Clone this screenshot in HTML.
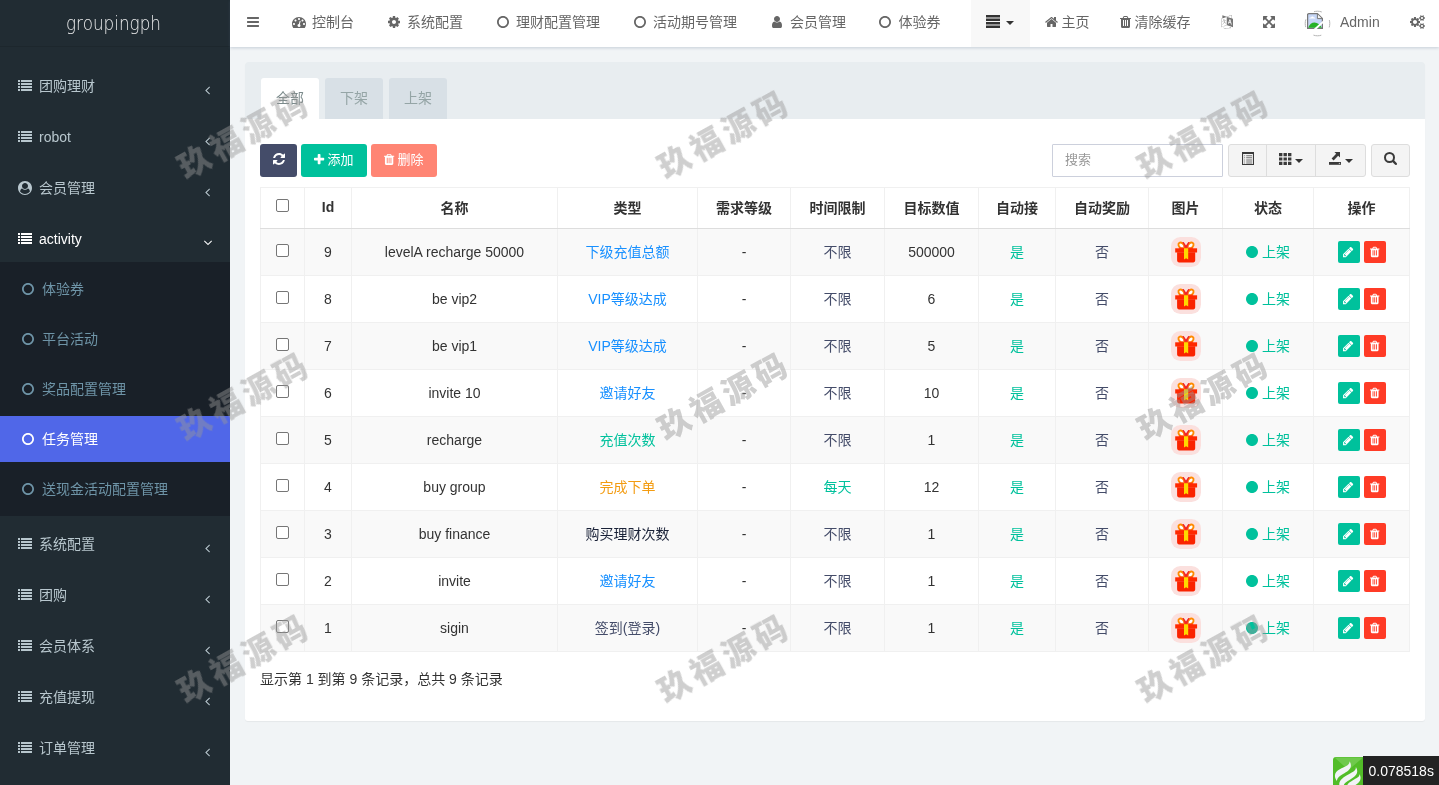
<!DOCTYPE html>
<html lang="zh-CN"><head><meta charset="utf-8"><title>groupingph</title>
<style>
*{box-sizing:border-box;margin:0;padding:0}
html,body{width:1439px;height:785px;overflow:hidden}
body{background:#f1f4f6;font-family:"Liberation Sans","Noto Sans CJK SC",sans-serif;font-size:14px;color:#333;position:relative}
#app{position:absolute;left:0;top:0;width:1439px;height:785px;overflow:hidden;will-change:transform}
svg.i{display:inline-block;vertical-align:-0.143em;overflow:visible}
#sidebar{position:absolute;left:0;top:0;width:230px;height:785px;background:#212c33;color:#b8c7ce}
.logo{height:47px;line-height:46px;text-align:center;color:#fff;font-size:20px;font-family:"DejaVu Sans","Liberation Sans",sans-serif;font-weight:200;opacity:.9;border-bottom:1px solid rgba(0,0,0,.12)}
.logo span{display:inline-block;transform:scaleX(.84);position:relative;left:-1.5px;transform-origin:50% 50%}
.smenu{position:absolute;top:64px;left:0;width:230px}
.sitem{height:45px;margin-bottom:6px;position:relative;color:#b8c7ce;font-size:14px}
.sitem.open{color:#fff}
.sico{position:absolute;left:18px;top:14px;line-height:16px}
.slabel{position:absolute;left:39px;top:12px;line-height:20px}
.sarrow{position:absolute;left:205px;top:18px;line-height:16px}
.submenu{background:#192028;padding-top:2px;height:254px;margin-top:-6px;margin-bottom:6px}
.subitem{height:50px;line-height:50px;padding-left:22px;color:#6e94a7;font-size:14px;position:relative}
.subitem .subico{display:inline-block;width:20px}
.subitem.active{background:#5067e8;color:#fff;height:46px;line-height:46px;margin:2px 0}
#navbar{position:absolute;left:230px;top:0;width:1209px;height:47px;background:#fff;box-shadow:0 1px 3px rgba(90,110,140,.28)}
.nav{position:absolute;top:0;height:44px;line-height:44px;color:#666;font-size:14px;white-space:nowrap;margin-left:-230px}
.navdd{position:absolute;left:741px;top:0;width:59px;height:47px;background:#f8f8f8;line-height:45px;padding-left:15px;color:#333}
.caret{display:inline-block;width:0;height:0;border-top:4px solid;border-left:4px solid transparent;border-right:4px solid transparent;vertical-align:middle;margin-left:5px}
.gb .caret{position:relative;top:2px}
.avatar{position:absolute;left:1074px;top:10px;width:27px;height:27px}
#panel{position:absolute;left:245px;top:62px;width:1180px;height:659px;background:#fff;border-radius:3px;box-shadow:0 1px 1px rgba(0,0,0,.05)}
.phead{height:57px;background:#e8edf0;border-radius:3px 3px 0 0;position:relative}
.tab{position:absolute;top:16px;width:58px;height:41px;line-height:40px;text-align:center;background:#d8e0e6;color:#95a5a6;border-radius:3px 3px 0 0;font-size:14px}
.tab.active{background:#fff;color:#7b8a8b}
.toolbar{position:absolute;left:0;top:82px;width:1180px;height:33px}
.btn{position:absolute;top:0;height:33px;line-height:32px;border-radius:3px;color:#fff;text-align:center;font-size:13px}
.b-ref{background:#444c69}.b-add{background:#00c19c}.b-del{background:#ff8574}
.search{position:absolute;left:807px;top:0;width:171px;height:33px;border:1px solid #ccd0dc;border-radius:1px;line-height:29px;padding-left:12px;color:#999;font-size:13px;background:#fff}
.bgroup{position:absolute;left:983px;top:0;width:138px;height:33px;border:1px solid #ddd;border-radius:3px;background:#f4f4f4;display:flex}
.gb{display:block;height:31px;line-height:27px;text-align:center;border-right:1px solid #ddd;color:#333}
.gsearch{position:absolute;left:1126px;top:0;width:39px;height:33px;border:1px solid #ddd;border-radius:3px;background:#f4f4f4;text-align:center;line-height:27px;color:#333}
.tbl{position:absolute;left:15px;top:125px;width:1149px;border-collapse:collapse;table-layout:fixed;font-size:14px}
.tbl th,.tbl td{border:1px solid #f0f0f0;text-align:center;vertical-align:middle;padding:0}
.tbl th{height:41px;padding-bottom:2px;font-weight:bold;color:#333;border-bottom:1px solid #ddd}
.tbl td{height:47px}
.tbl tr.odd td{background:#f9f9f9}
.tbl td.cj{padding-bottom:3px}
.cb{display:inline-block;width:13px;height:13px;border:1px solid #767676;border-radius:2px;background:#fff;position:relative;top:0}
.c-info{color:#1890ff}.c-succ{color:#00c19c}.c-warn{color:#f39c12}.c-p{color:#444c69}.c-dark{color:#1a2238}
.gift{vertical-align:middle}
.xbtn{display:inline-block;width:22px;height:22px;line-height:21px;border-radius:2px;text-align:center;margin:0 2px;vertical-align:middle}
.xbtn.g{background:#00c19c}.xbtn.r{background:#ff3b26;margin-left:2px}
.pinfo{position:absolute;left:15px;top:607px;line-height:20px;font-size:14px;color:#333}
.wm{position:absolute;width:300px;height:60px;line-height:60px;text-align:center;font-size:32px;font-weight:900;color:rgba(150,150,150,.46);transform:rotate(-29deg);letter-spacing:4.5px;text-indent:4.5px;pointer-events:none;font-family:"Noto Sans CJK SC",sans-serif;z-index:50}
#trace{position:absolute;right:0;bottom:0;height:29px;display:flex;align-items:flex-end;z-index:60}
.tlogo{width:30px;height:28px}
.ttime{background:#232323;color:#fff;height:29px;line-height:30px;font-size:14px;padding:0 0 0 5.5px;width:76px}

</style></head><body><div id="app">
<div id="sidebar"><div class="logo"><span>groupingph</span></div><div class="smenu"><div class="sitem"><span class="sico"><svg class="i " width="14.00" height="14" viewBox="0 0 1792 1792" style=""><path fill="currentColor" d="M256 1312C256 1295 241 1280 224 1280H32C15 1280 0 1295 0 1312V1504C0 1521 15 1536 32 1536H224C241 1536 256 1521 256 1504ZM256 928C256 911 241 896 224 896H32C15 896 0 911 0 928V1120C0 1137 15 1152 32 1152H224C241 1152 256 1137 256 1120ZM256 544C256 527 241 512 224 512H32C15 512 0 527 0 544V736C0 753 15 768 32 768H224C241 768 256 753 256 736ZM1792 1312C1792 1295 1777 1280 1760 1280H416C399 1280 384 1295 384 1312V1504C384 1521 399 1536 416 1536H1760C1777 1536 1792 1521 1792 1504ZM256 160C256 143 241 128 224 128H32C15 128 0 143 0 160V352C0 369 15 384 32 384H224C241 384 256 369 256 352ZM1792 928C1792 911 1777 896 1760 896H416C399 896 384 911 384 928V1120C384 1137 399 1152 416 1152H1760C1777 1152 1792 1137 1792 1120ZM1792 544C1792 527 1777 512 1760 512H416C399 512 384 527 384 544V736C384 753 399 768 416 768H1760C1777 768 1792 753 1792 736ZM1792 160C1792 143 1777 128 1760 128H416C399 128 384 143 384 160V352C384 369 399 384 416 384H1760C1777 384 1792 369 1792 352Z"/></svg></span><span class="slabel">团购理财</span><span class="sarrow"><svg class="i " width="5.00" height="14" viewBox="0 0 640 1792" style=""><path fill="currentColor" d="M627 544C627 535 623 527 617 521L567 471C561 465 552 461 544 461C536 461 527 465 521 471L55 937C49 943 45 952 45 960C45 968 49 977 55 983L521 1449C527 1455 536 1459 544 1459C552 1459 561 1455 567 1449L617 1399C623 1393 627 1384 627 1376C627 1368 623 1359 617 1353L224 960L617 567C623 561 627 552 627 544Z"/></svg></span></div><div class="sitem"><span class="sico"><svg class="i " width="14.00" height="14" viewBox="0 0 1792 1792" style=""><path fill="currentColor" d="M256 1312C256 1295 241 1280 224 1280H32C15 1280 0 1295 0 1312V1504C0 1521 15 1536 32 1536H224C241 1536 256 1521 256 1504ZM256 928C256 911 241 896 224 896H32C15 896 0 911 0 928V1120C0 1137 15 1152 32 1152H224C241 1152 256 1137 256 1120ZM256 544C256 527 241 512 224 512H32C15 512 0 527 0 544V736C0 753 15 768 32 768H224C241 768 256 753 256 736ZM1792 1312C1792 1295 1777 1280 1760 1280H416C399 1280 384 1295 384 1312V1504C384 1521 399 1536 416 1536H1760C1777 1536 1792 1521 1792 1504ZM256 160C256 143 241 128 224 128H32C15 128 0 143 0 160V352C0 369 15 384 32 384H224C241 384 256 369 256 352ZM1792 928C1792 911 1777 896 1760 896H416C399 896 384 911 384 928V1120C384 1137 399 1152 416 1152H1760C1777 1152 1792 1137 1792 1120ZM1792 544C1792 527 1777 512 1760 512H416C399 512 384 527 384 544V736C384 753 399 768 416 768H1760C1777 768 1792 753 1792 736ZM1792 160C1792 143 1777 128 1760 128H416C399 128 384 143 384 160V352C384 369 399 384 416 384H1760C1777 384 1792 369 1792 352Z"/></svg></span><span class="slabel">robot</span><span class="sarrow"><svg class="i " width="5.00" height="14" viewBox="0 0 640 1792" style=""><path fill="currentColor" d="M627 544C627 535 623 527 617 521L567 471C561 465 552 461 544 461C536 461 527 465 521 471L55 937C49 943 45 952 45 960C45 968 49 977 55 983L521 1449C527 1455 536 1459 544 1459C552 1459 561 1455 567 1449L617 1399C623 1393 627 1384 627 1376C627 1368 623 1359 617 1353L224 960L617 567C623 561 627 552 627 544Z"/></svg></span></div><div class="sitem"><span class="sico"><svg class="i " width="14.00" height="14" viewBox="0 0 1792 1792" style=""><path fill="currentColor" d="M1523 1339C1384 1535 1155 1664 896 1664C637 1664 408 1535 269 1339C295 1152 371 986 541 963C629 1059 756 1120 896 1120C1036 1120 1163 1059 1251 963C1421 986 1497 1152 1523 1339ZM1280 640C1280 852 1108 1024 896 1024C684 1024 512 852 512 640C512 428 684 256 896 256C1108 256 1280 428 1280 640ZM1792 896C1792 401 1391 0 896 0C401 0 0 401 0 896C0 1390 401 1792 896 1792C1392 1792 1792 1389 1792 896Z"/></svg></span><span class="slabel">会员管理</span><span class="sarrow"><svg class="i " width="5.00" height="14" viewBox="0 0 640 1792" style=""><path fill="currentColor" d="M627 544C627 535 623 527 617 521L567 471C561 465 552 461 544 461C536 461 527 465 521 471L55 937C49 943 45 952 45 960C45 968 49 977 55 983L521 1449C527 1455 536 1459 544 1459C552 1459 561 1455 567 1449L617 1399C623 1393 627 1384 627 1376C627 1368 623 1359 617 1353L224 960L617 567C623 561 627 552 627 544Z"/></svg></span></div><div class="sitem open"><span class="sico"><svg class="i " width="14.00" height="14" viewBox="0 0 1792 1792" style=""><path fill="currentColor" d="M256 1312C256 1295 241 1280 224 1280H32C15 1280 0 1295 0 1312V1504C0 1521 15 1536 32 1536H224C241 1536 256 1521 256 1504ZM256 928C256 911 241 896 224 896H32C15 896 0 911 0 928V1120C0 1137 15 1152 32 1152H224C241 1152 256 1137 256 1120ZM256 544C256 527 241 512 224 512H32C15 512 0 527 0 544V736C0 753 15 768 32 768H224C241 768 256 753 256 736ZM1792 1312C1792 1295 1777 1280 1760 1280H416C399 1280 384 1295 384 1312V1504C384 1521 399 1536 416 1536H1760C1777 1536 1792 1521 1792 1504ZM256 160C256 143 241 128 224 128H32C15 128 0 143 0 160V352C0 369 15 384 32 384H224C241 384 256 369 256 352ZM1792 928C1792 911 1777 896 1760 896H416C399 896 384 911 384 928V1120C384 1137 399 1152 416 1152H1760C1777 1152 1792 1137 1792 1120ZM1792 544C1792 527 1777 512 1760 512H416C399 512 384 527 384 544V736C384 753 399 768 416 768H1760C1777 768 1792 753 1792 736ZM1792 160C1792 143 1777 128 1760 128H416C399 128 384 143 384 160V352C384 369 399 384 416 384H1760C1777 384 1792 369 1792 352Z"/></svg></span><span class="slabel">activity</span><span class="sarrow"><svg class="i " width="5.00" height="14" viewBox="0 0 640 1792" style="transform:rotate(-90deg);"><path fill="currentColor" d="M627 544C627 535 623 527 617 521L567 471C561 465 552 461 544 461C536 461 527 465 521 471L55 937C49 943 45 952 45 960C45 968 49 977 55 983L521 1449C527 1455 536 1459 544 1459C552 1459 561 1455 567 1449L617 1399C623 1393 627 1384 627 1376C627 1368 623 1359 617 1353L224 960L617 567C623 561 627 552 627 544Z"/></svg></span></div><div class="submenu"><div class="subitem"><span class="subico"><svg class="i " width="12.00" height="14" viewBox="0 0 1536 1792" style=""><path fill="currentColor" d="M768 352C1068 352 1312 596 1312 896C1312 1196 1068 1440 768 1440C468 1440 224 1196 224 896C224 596 468 352 768 352ZM1536 896C1536 472 1192 128 768 128C344 128 0 472 0 896C0 1320 344 1664 768 1664C1192 1664 1536 1320 1536 896Z"/></svg></span><span>体验券</span></div><div class="subitem"><span class="subico"><svg class="i " width="12.00" height="14" viewBox="0 0 1536 1792" style=""><path fill="currentColor" d="M768 352C1068 352 1312 596 1312 896C1312 1196 1068 1440 768 1440C468 1440 224 1196 224 896C224 596 468 352 768 352ZM1536 896C1536 472 1192 128 768 128C344 128 0 472 0 896C0 1320 344 1664 768 1664C1192 1664 1536 1320 1536 896Z"/></svg></span><span>平台活动</span></div><div class="subitem"><span class="subico"><svg class="i " width="12.00" height="14" viewBox="0 0 1536 1792" style=""><path fill="currentColor" d="M768 352C1068 352 1312 596 1312 896C1312 1196 1068 1440 768 1440C468 1440 224 1196 224 896C224 596 468 352 768 352ZM1536 896C1536 472 1192 128 768 128C344 128 0 472 0 896C0 1320 344 1664 768 1664C1192 1664 1536 1320 1536 896Z"/></svg></span><span>奖品配置管理</span></div><div class="subitem active"><span class="subico"><svg class="i " width="12.00" height="14" viewBox="0 0 1536 1792" style=""><path fill="currentColor" d="M768 352C1068 352 1312 596 1312 896C1312 1196 1068 1440 768 1440C468 1440 224 1196 224 896C224 596 468 352 768 352ZM1536 896C1536 472 1192 128 768 128C344 128 0 472 0 896C0 1320 344 1664 768 1664C1192 1664 1536 1320 1536 896Z"/></svg></span><span>任务管理</span></div><div class="subitem"><span class="subico"><svg class="i " width="12.00" height="14" viewBox="0 0 1536 1792" style=""><path fill="currentColor" d="M768 352C1068 352 1312 596 1312 896C1312 1196 1068 1440 768 1440C468 1440 224 1196 224 896C224 596 468 352 768 352ZM1536 896C1536 472 1192 128 768 128C344 128 0 472 0 896C0 1320 344 1664 768 1664C1192 1664 1536 1320 1536 896Z"/></svg></span><span>送现金活动配置管理</span></div></div><div class="sitem"><span class="sico"><svg class="i " width="14.00" height="14" viewBox="0 0 1792 1792" style=""><path fill="currentColor" d="M256 1312C256 1295 241 1280 224 1280H32C15 1280 0 1295 0 1312V1504C0 1521 15 1536 32 1536H224C241 1536 256 1521 256 1504ZM256 928C256 911 241 896 224 896H32C15 896 0 911 0 928V1120C0 1137 15 1152 32 1152H224C241 1152 256 1137 256 1120ZM256 544C256 527 241 512 224 512H32C15 512 0 527 0 544V736C0 753 15 768 32 768H224C241 768 256 753 256 736ZM1792 1312C1792 1295 1777 1280 1760 1280H416C399 1280 384 1295 384 1312V1504C384 1521 399 1536 416 1536H1760C1777 1536 1792 1521 1792 1504ZM256 160C256 143 241 128 224 128H32C15 128 0 143 0 160V352C0 369 15 384 32 384H224C241 384 256 369 256 352ZM1792 928C1792 911 1777 896 1760 896H416C399 896 384 911 384 928V1120C384 1137 399 1152 416 1152H1760C1777 1152 1792 1137 1792 1120ZM1792 544C1792 527 1777 512 1760 512H416C399 512 384 527 384 544V736C384 753 399 768 416 768H1760C1777 768 1792 753 1792 736ZM1792 160C1792 143 1777 128 1760 128H416C399 128 384 143 384 160V352C384 369 399 384 416 384H1760C1777 384 1792 369 1792 352Z"/></svg></span><span class="slabel">系统配置</span><span class="sarrow"><svg class="i " width="5.00" height="14" viewBox="0 0 640 1792" style=""><path fill="currentColor" d="M627 544C627 535 623 527 617 521L567 471C561 465 552 461 544 461C536 461 527 465 521 471L55 937C49 943 45 952 45 960C45 968 49 977 55 983L521 1449C527 1455 536 1459 544 1459C552 1459 561 1455 567 1449L617 1399C623 1393 627 1384 627 1376C627 1368 623 1359 617 1353L224 960L617 567C623 561 627 552 627 544Z"/></svg></span></div><div class="sitem"><span class="sico"><svg class="i " width="14.00" height="14" viewBox="0 0 1792 1792" style=""><path fill="currentColor" d="M256 1312C256 1295 241 1280 224 1280H32C15 1280 0 1295 0 1312V1504C0 1521 15 1536 32 1536H224C241 1536 256 1521 256 1504ZM256 928C256 911 241 896 224 896H32C15 896 0 911 0 928V1120C0 1137 15 1152 32 1152H224C241 1152 256 1137 256 1120ZM256 544C256 527 241 512 224 512H32C15 512 0 527 0 544V736C0 753 15 768 32 768H224C241 768 256 753 256 736ZM1792 1312C1792 1295 1777 1280 1760 1280H416C399 1280 384 1295 384 1312V1504C384 1521 399 1536 416 1536H1760C1777 1536 1792 1521 1792 1504ZM256 160C256 143 241 128 224 128H32C15 128 0 143 0 160V352C0 369 15 384 32 384H224C241 384 256 369 256 352ZM1792 928C1792 911 1777 896 1760 896H416C399 896 384 911 384 928V1120C384 1137 399 1152 416 1152H1760C1777 1152 1792 1137 1792 1120ZM1792 544C1792 527 1777 512 1760 512H416C399 512 384 527 384 544V736C384 753 399 768 416 768H1760C1777 768 1792 753 1792 736ZM1792 160C1792 143 1777 128 1760 128H416C399 128 384 143 384 160V352C384 369 399 384 416 384H1760C1777 384 1792 369 1792 352Z"/></svg></span><span class="slabel">团购</span><span class="sarrow"><svg class="i " width="5.00" height="14" viewBox="0 0 640 1792" style=""><path fill="currentColor" d="M627 544C627 535 623 527 617 521L567 471C561 465 552 461 544 461C536 461 527 465 521 471L55 937C49 943 45 952 45 960C45 968 49 977 55 983L521 1449C527 1455 536 1459 544 1459C552 1459 561 1455 567 1449L617 1399C623 1393 627 1384 627 1376C627 1368 623 1359 617 1353L224 960L617 567C623 561 627 552 627 544Z"/></svg></span></div><div class="sitem"><span class="sico"><svg class="i " width="14.00" height="14" viewBox="0 0 1792 1792" style=""><path fill="currentColor" d="M256 1312C256 1295 241 1280 224 1280H32C15 1280 0 1295 0 1312V1504C0 1521 15 1536 32 1536H224C241 1536 256 1521 256 1504ZM256 928C256 911 241 896 224 896H32C15 896 0 911 0 928V1120C0 1137 15 1152 32 1152H224C241 1152 256 1137 256 1120ZM256 544C256 527 241 512 224 512H32C15 512 0 527 0 544V736C0 753 15 768 32 768H224C241 768 256 753 256 736ZM1792 1312C1792 1295 1777 1280 1760 1280H416C399 1280 384 1295 384 1312V1504C384 1521 399 1536 416 1536H1760C1777 1536 1792 1521 1792 1504ZM256 160C256 143 241 128 224 128H32C15 128 0 143 0 160V352C0 369 15 384 32 384H224C241 384 256 369 256 352ZM1792 928C1792 911 1777 896 1760 896H416C399 896 384 911 384 928V1120C384 1137 399 1152 416 1152H1760C1777 1152 1792 1137 1792 1120ZM1792 544C1792 527 1777 512 1760 512H416C399 512 384 527 384 544V736C384 753 399 768 416 768H1760C1777 768 1792 753 1792 736ZM1792 160C1792 143 1777 128 1760 128H416C399 128 384 143 384 160V352C384 369 399 384 416 384H1760C1777 384 1792 369 1792 352Z"/></svg></span><span class="slabel">会员体系</span><span class="sarrow"><svg class="i " width="5.00" height="14" viewBox="0 0 640 1792" style=""><path fill="currentColor" d="M627 544C627 535 623 527 617 521L567 471C561 465 552 461 544 461C536 461 527 465 521 471L55 937C49 943 45 952 45 960C45 968 49 977 55 983L521 1449C527 1455 536 1459 544 1459C552 1459 561 1455 567 1449L617 1399C623 1393 627 1384 627 1376C627 1368 623 1359 617 1353L224 960L617 567C623 561 627 552 627 544Z"/></svg></span></div><div class="sitem"><span class="sico"><svg class="i " width="14.00" height="14" viewBox="0 0 1792 1792" style=""><path fill="currentColor" d="M256 1312C256 1295 241 1280 224 1280H32C15 1280 0 1295 0 1312V1504C0 1521 15 1536 32 1536H224C241 1536 256 1521 256 1504ZM256 928C256 911 241 896 224 896H32C15 896 0 911 0 928V1120C0 1137 15 1152 32 1152H224C241 1152 256 1137 256 1120ZM256 544C256 527 241 512 224 512H32C15 512 0 527 0 544V736C0 753 15 768 32 768H224C241 768 256 753 256 736ZM1792 1312C1792 1295 1777 1280 1760 1280H416C399 1280 384 1295 384 1312V1504C384 1521 399 1536 416 1536H1760C1777 1536 1792 1521 1792 1504ZM256 160C256 143 241 128 224 128H32C15 128 0 143 0 160V352C0 369 15 384 32 384H224C241 384 256 369 256 352ZM1792 928C1792 911 1777 896 1760 896H416C399 896 384 911 384 928V1120C384 1137 399 1152 416 1152H1760C1777 1152 1792 1137 1792 1120ZM1792 544C1792 527 1777 512 1760 512H416C399 512 384 527 384 544V736C384 753 399 768 416 768H1760C1777 768 1792 753 1792 736ZM1792 160C1792 143 1777 128 1760 128H416C399 128 384 143 384 160V352C384 369 399 384 416 384H1760C1777 384 1792 369 1792 352Z"/></svg></span><span class="slabel">充值提现</span><span class="sarrow"><svg class="i " width="5.00" height="14" viewBox="0 0 640 1792" style=""><path fill="currentColor" d="M627 544C627 535 623 527 617 521L567 471C561 465 552 461 544 461C536 461 527 465 521 471L55 937C49 943 45 952 45 960C45 968 49 977 55 983L521 1449C527 1455 536 1459 544 1459C552 1459 561 1455 567 1449L617 1399C623 1393 627 1384 627 1376C627 1368 623 1359 617 1353L224 960L617 567C623 561 627 552 627 544Z"/></svg></span></div><div class="sitem"><span class="sico"><svg class="i " width="14.00" height="14" viewBox="0 0 1792 1792" style=""><path fill="currentColor" d="M256 1312C256 1295 241 1280 224 1280H32C15 1280 0 1295 0 1312V1504C0 1521 15 1536 32 1536H224C241 1536 256 1521 256 1504ZM256 928C256 911 241 896 224 896H32C15 896 0 911 0 928V1120C0 1137 15 1152 32 1152H224C241 1152 256 1137 256 1120ZM256 544C256 527 241 512 224 512H32C15 512 0 527 0 544V736C0 753 15 768 32 768H224C241 768 256 753 256 736ZM1792 1312C1792 1295 1777 1280 1760 1280H416C399 1280 384 1295 384 1312V1504C384 1521 399 1536 416 1536H1760C1777 1536 1792 1521 1792 1504ZM256 160C256 143 241 128 224 128H32C15 128 0 143 0 160V352C0 369 15 384 32 384H224C241 384 256 369 256 352ZM1792 928C1792 911 1777 896 1760 896H416C399 896 384 911 384 928V1120C384 1137 399 1152 416 1152H1760C1777 1152 1792 1137 1792 1120ZM1792 544C1792 527 1777 512 1760 512H416C399 512 384 527 384 544V736C384 753 399 768 416 768H1760C1777 768 1792 753 1792 736ZM1792 160C1792 143 1777 128 1760 128H416C399 128 384 143 384 160V352C384 369 399 384 416 384H1760C1777 384 1792 369 1792 352Z"/></svg></span><span class="slabel">订单管理</span><span class="sarrow"><svg class="i " width="5.00" height="14" viewBox="0 0 640 1792" style=""><path fill="currentColor" d="M627 544C627 535 623 527 617 521L567 471C561 465 552 461 544 461C536 461 527 465 521 471L55 937C49 943 45 952 45 960C45 968 49 977 55 983L521 1449C527 1455 536 1459 544 1459C552 1459 561 1455 567 1449L617 1399C623 1393 627 1384 627 1376C627 1368 623 1359 617 1353L224 960L617 567C623 561 627 552 627 544Z"/></svg></span></div></div></div>
<div id="navbar"><a class="nav" style="left:246.5px"><svg class="i " width="12.00" height="14" viewBox="0 0 1536 1792" style=""><path fill="currentColor" d="M1536 1344C1536 1309 1507 1280 1472 1280H64C29 1280 0 1309 0 1344V1472C0 1507 29 1536 64 1536H1472C1507 1536 1536 1507 1536 1472ZM1536 832C1536 797 1507 768 1472 768H64C29 768 0 797 0 832V960C0 995 29 1024 64 1024H1472C1507 1024 1536 995 1536 960ZM1536 320C1536 285 1507 256 1472 256H64C29 256 0 285 0 320V448C0 483 29 512 64 512H1472C1507 512 1536 483 1536 448Z"/></svg></a><a class="nav" style="left:292px"><svg class="i " width="14.00" height="14" viewBox="0 0 1792 1792" style=""><path fill="currentColor" d="M384 1152C384 1223 327 1280 256 1280C185 1280 128 1223 128 1152C128 1081 185 1024 256 1024C327 1024 384 1081 384 1152ZM576 704C576 775 519 832 448 832C377 832 320 775 320 704C320 633 377 576 448 576C519 576 576 633 576 704ZM1004 1185C1069 1230 1103 1312 1082 1393C1055 1495 950 1557 847 1530C745 1503 683 1398 710 1295C732 1214 801 1159 880 1153L981 771C990 737 1025 716 1059 725C1093 734 1113 769 1105 803ZM1664 1152C1664 1223 1607 1280 1536 1280C1465 1280 1408 1223 1408 1152C1408 1081 1465 1024 1536 1024C1607 1024 1664 1081 1664 1152ZM1024 512C1024 583 967 640 896 640C825 640 768 583 768 512C768 441 825 384 896 384C967 384 1024 441 1024 512ZM1472 704C1472 775 1415 832 1344 832C1273 832 1216 775 1216 704C1216 633 1273 576 1344 576C1415 576 1472 633 1472 704ZM1792 1152C1792 658 1390 256 896 256C402 256 0 658 0 1152C0 1324 49 1491 141 1635C153 1653 173 1664 195 1664H1597C1619 1664 1639 1653 1651 1635C1743 1490 1792 1324 1792 1152Z"/></svg><span style="margin-left:6px">控制台</span></a><a class="nav" style="left:388px"><svg class="i " width="12.00" height="14" viewBox="0 0 1536 1792" style=""><path fill="currentColor" d="M1024 896C1024 1037 909 1152 768 1152C627 1152 512 1037 512 896C512 755 627 640 768 640C909 640 1024 755 1024 896ZM1536 787C1536 770 1524 754 1507 751L1324 723C1314 690 1300 657 1283 625C1317 578 1354 534 1388 488C1393 481 1396 474 1396 465C1396 457 1394 449 1389 443C1347 384 1277 322 1224 273C1217 267 1208 263 1199 263C1190 263 1181 266 1175 272L1033 379C1004 364 974 352 943 342L915 158C913 141 897 128 879 128H657C639 128 625 140 621 156C605 216 599 281 592 342C561 352 530 365 501 380L363 273C355 267 346 263 337 263C303 263 168 409 144 442C139 449 135 456 135 465C135 474 139 482 145 489C182 534 218 579 252 627C236 657 223 687 213 719L27 747C12 750 0 768 0 783V1005C0 1022 12 1038 29 1041L212 1068C222 1102 236 1135 253 1167C219 1214 182 1258 148 1304C143 1311 140 1318 140 1327C140 1335 142 1343 147 1350C189 1408 259 1470 312 1518C319 1525 328 1529 337 1529C346 1529 355 1526 362 1520L503 1413C532 1428 562 1440 593 1450L621 1634C623 1651 639 1664 657 1664H879C897 1664 911 1652 915 1636C931 1576 937 1511 944 1450C975 1440 1006 1427 1035 1412L1173 1520C1181 1525 1190 1529 1199 1529C1233 1529 1368 1382 1392 1350C1398 1343 1401 1336 1401 1327C1401 1318 1397 1309 1391 1302C1354 1257 1318 1213 1284 1164C1300 1135 1312 1105 1323 1073L1508 1045C1524 1042 1536 1024 1536 1009Z"/></svg><span style="margin-left:7px">系统配置</span></a><a class="nav" style="left:497px"><svg class="i " width="12.00" height="14" viewBox="0 0 1536 1792" style=""><path fill="currentColor" d="M768 352C1068 352 1312 596 1312 896C1312 1196 1068 1440 768 1440C468 1440 224 1196 224 896C224 596 468 352 768 352ZM1536 896C1536 472 1192 128 768 128C344 128 0 472 0 896C0 1320 344 1664 768 1664C1192 1664 1536 1320 1536 896Z"/></svg><span style="margin-left:7px">理财配置管理</span></a><a class="nav" style="left:634px"><svg class="i " width="12.00" height="14" viewBox="0 0 1536 1792" style=""><path fill="currentColor" d="M768 352C1068 352 1312 596 1312 896C1312 1196 1068 1440 768 1440C468 1440 224 1196 224 896C224 596 468 352 768 352ZM1536 896C1536 472 1192 128 768 128C344 128 0 472 0 896C0 1320 344 1664 768 1664C1192 1664 1536 1320 1536 896Z"/></svg><span style="margin-left:7px">活动期号管理</span></a><a class="nav" style="left:772px"><svg class="i " width="10.00" height="14" viewBox="0 0 1280 1792" style=""><path fill="currentColor" d="M1280 1399C1280 1136 1215 832 953 832C872 911 762 960 640 960C518 960 408 911 327 832C65 832 0 1136 0 1399C0 1545 96 1664 213 1664H1067C1184 1664 1280 1545 1280 1399ZM1024 512C1024 300 852 128 640 128C428 128 256 300 256 512C256 724 428 896 640 896C852 896 1024 724 1024 512Z"/></svg><span style="margin-left:8px">会员管理</span></a><a class="nav" style="left:879px"><svg class="i " width="12.00" height="14" viewBox="0 0 1536 1792" style=""><path fill="currentColor" d="M768 352C1068 352 1312 596 1312 896C1312 1196 1068 1440 768 1440C468 1440 224 1196 224 896C224 596 468 352 768 352ZM1536 896C1536 472 1192 128 768 128C344 128 0 472 0 896C0 1320 344 1664 768 1664C1192 1664 1536 1320 1536 896Z"/></svg><span style="margin-left:7.5px">体验券</span></a><div class="navdd"><svg class="i" width="14" height="13" viewBox="0 0 14 13" style="vertical-align:-0.5px"><path fill="#333" d="M0 0h14v2.4H0zM0 3.5h14v2.4H0zM0 7h14v2.4H0zM0 10.5h14v2.4H0z"/></svg><span class="caret" style="margin-left:6px"></span></div><a class="nav" style="left:1045px"><svg class="i " width="13.00" height="14" viewBox="0 0 1664 1792" style=""><path fill="currentColor" d="M1408 992C1408 990 1408 988 1407 986L832 512L257 986C257 988 256 990 256 992V1472C256 1507 285 1536 320 1536H704V1152H960V1536H1344C1379 1536 1408 1507 1408 1472ZM1631 923C1642 910 1640 889 1627 878L1408 696V288C1408 270 1394 256 1376 256H1184C1166 256 1152 270 1152 288V483L908 279C866 244 798 244 756 279L37 878C24 889 22 910 33 923L95 997C100 1003 108 1007 116 1008C125 1009 133 1006 140 1001L832 424L1524 1001C1530 1006 1537 1008 1545 1008C1546 1008 1547 1008 1548 1008C1556 1007 1564 1003 1569 997L1631 923Z"/></svg><span style="margin-left:3.5px">主页</span></a><a class="nav" style="left:1120px"><svg class="i " width="11.00" height="14" viewBox="0 0 1408 1792" style=""><path fill="currentColor" d="M512 1376C512 1394 498 1408 480 1408H416C398 1408 384 1394 384 1376V672C384 654 398 640 416 640H480C498 640 512 654 512 672V1376ZM768 1376C768 1394 754 1408 736 1408H672C654 1408 640 1394 640 1376V672C640 654 654 640 672 640H736C754 640 768 654 768 672V1376ZM1024 1376C1024 1394 1010 1408 992 1408H928C910 1408 896 1394 896 1376V672C896 654 910 640 928 640H992C1010 640 1024 654 1024 672V1376ZM480 384 529 267C532 263 540 257 546 256H863C868 257 877 263 880 267L928 384ZM1408 416C1408 398 1394 384 1376 384H1067L997 217C977 168 917 128 864 128H544C491 128 431 168 411 217L341 384H32C14 384 0 398 0 416V480C0 498 14 512 32 512H128V1464C128 1574 200 1664 288 1664H1120C1208 1664 1280 1570 1280 1460V512H1376C1394 512 1408 498 1408 480Z"/></svg><span style="margin-left:3.5px">清除缓存</span></a><a class="nav" style="left:1220.5px;color:#777"><svg class="i " width="12.00" height="14" viewBox="0 0 1536 1792" style=""><path fill="currentColor" d="M654 1078C656 1070 645 1024 639 1022C633 1020 514 970 497 962C483 955 449 941 433 934C478 864 506 811 510 803C517 788 565 694 566 689C567 683 568 661 567 656C566 651 549 661 525 669C501 677 456 707 438 710C421 714 365 735 336 745C307 755 253 771 231 777C209 783 189 784 177 788C178 805 182 811 182 811C185 816 197 829 210 832C224 836 247 835 257 832C268 830 286 821 288 817C290 813 287 801 291 797C295 794 350 781 370 775C391 768 470 741 480 742C477 754 414 880 393 918C373 956 254 1122 229 1151C209 1174 163 1231 147 1243C151 1245 180 1242 185 1239C218 1218 272 1150 290 1129C342 1068 388 1003 424 948C431 951 488 998 503 1008C518 1018 577 1051 590 1057C603 1062 652 1085 654 1078ZM449 592C446 579 438 575 428 575C418 576 388 584 373 589C359 593 328 602 315 605C302 608 273 604 269 600C265 596 274 631 286 644C308 666 326 669 335 670C355 670 380 664 395 658C410 652 435 639 445 620C447 616 452 609 449 592ZM1147 721 1071 906 1210 948ZM39 1521V490L733 257V1289ZM1280 1204 1243 1069 1032 1004 987 1114 885 1083 1101 547 1201 578 1382 1235ZM777 242 1350 46V426ZM1088 1565 1131 1638C1100 1655 1071 1674 1038 1689C924 1738 839 1754 714 1754C613 1754 487 1713 397 1668C384 1662 337 1633 328 1633C318 1633 310 1641 310 1652C310 1659 312 1663 318 1668C402 1729 595 1792 701 1792H785C814 1792 847 1786 876 1780C971 1764 1071 1724 1152 1672L1192 1738L1246 1578ZM1536 486 1389 439V21C1389 8 1380 0 1369 0C1360 0 738 215 731 217L173 19V403C88 432 27 452 24 453C18 455 10 457 4 464C2 466 1 471 0 474V1552C0 1553 1 1554 1 1555C4 1563 11 1568 19 1568C29 1568 746 1326 762 1319C762 1319 763 1319 1536 1565Z"/></svg></a><a class="nav" style="left:1263px"><svg class="i " width="12.00" height="14" viewBox="0 0 1536 1792" style=""><path fill="currentColor" d="M1283 541 1427 685C1439 697 1455 704 1472 704C1480 704 1489 702 1497 699C1520 689 1536 666 1536 640V192C1536 157 1507 128 1472 128H1024C998 128 975 144 965 168C955 191 960 219 979 237L1123 381L768 736L413 381L557 237C576 219 581 191 571 168C561 144 538 128 512 128H64C29 128 0 157 0 192V640C0 666 16 689 40 699C47 702 56 704 64 704C81 704 97 697 109 685L253 541L608 896L253 1251L109 1107C91 1088 63 1083 40 1093C16 1103 0 1126 0 1152V1600C0 1635 29 1664 64 1664H512C538 1664 561 1648 571 1624C581 1601 576 1573 557 1555L413 1411L768 1056L1123 1411L979 1555C960 1573 955 1601 965 1624C975 1648 998 1664 1024 1664H1472C1507 1664 1536 1635 1536 1600V1152C1536 1126 1520 1103 1497 1093C1473 1083 1445 1088 1427 1107L1283 1251L928 896Z"/></svg></a><div class="avatar"><svg width="27" height="27" viewBox="0 0 27 27"><circle cx="13.5" cy="13.5" r="12.3" fill="none" stroke="#b4b4b4" stroke-width="1" stroke-dasharray="8 11.32" stroke-dashoffset="4"/><g transform="translate(3,3)"><path d="M0.6 1.2L1.8 0.6H10.4L15.4 5.6V15.4H0.6z" fill="#c6d6f6" stroke="#777" stroke-width="1.2"/><path d="M10.4 0.6V5.6H15.4z" fill="#f4f4f4" stroke="#777" stroke-width="1" stroke-linejoin="round"/><path d="M2.2 5.4c.2-1 1.3-1.2 1.8-.7c.3-1.6 2.6-1.6 2.9 0c.7-.3 1.4.1 1.5.7z" fill="#fff"/><path d="M1.2 14.8c1.2-3.4 3.6-5.2 6.4-5.2s5.6 2.2 7.2 5.2z" fill="#26b226"/><path d="M6.8 16L16 7.7V10.3L9.7 16z" fill="#fff"/></g></svg></div><a class="nav" style="left:1340px"><span>Admin</span></a><a class="nav" style="left:1410px"><svg class="i " width="15.00" height="14" viewBox="0 0 1920 1792" style=""><path fill="currentColor" d="M896 896C896 1037 781 1152 640 1152C499 1152 384 1037 384 896C384 755 499 640 640 640C781 640 896 755 896 896ZM1664 1408C1664 1478 1607 1536 1536 1536C1466 1536 1408 1479 1408 1408C1408 1338 1466 1280 1536 1280C1606 1280 1664 1338 1664 1408ZM1664 384C1664 454 1607 512 1536 512C1466 512 1408 455 1408 384C1408 314 1466 256 1536 256C1606 256 1664 314 1664 384ZM1280 805C1280 791 1270 778 1256 775L1104 752C1095 724 1083 697 1070 670C1098 631 1128 595 1157 556C1161 550 1164 544 1164 537C1164 509 1046 401 1020 377C1014 372 1007 369 999 369C992 369 985 371 979 376L861 465C837 453 812 442 786 434L763 281C761 267 747 256 733 256H547C533 256 521 266 517 280C504 329 499 384 494 434C467 443 442 453 417 466L302 376C296 372 289 369 281 369C252 369 140 490 120 517C115 523 113 530 113 537C113 544 116 551 120 557C152 595 182 632 210 672C197 697 186 722 178 748L23 772C10 774 0 789 0 802V987C0 1001 10 1014 24 1016L176 1040C185 1068 197 1095 211 1122C182 1161 152 1198 123 1236C119 1242 116 1248 116 1255C116 1284 234 1391 260 1415C266 1420 273 1423 281 1423C288 1423 296 1421 301 1416L419 1327C443 1339 468 1350 494 1358L517 1511C519 1525 533 1536 547 1536H733C747 1536 759 1526 763 1512C776 1463 781 1408 786 1357C813 1349 838 1339 863 1326L978 1416C984 1420 991 1423 999 1423C1028 1423 1140 1301 1160 1274C1165 1269 1167 1262 1167 1255C1167 1247 1164 1241 1160 1235C1128 1197 1098 1160 1070 1120C1083 1095 1094 1070 1102 1044L1257 1020C1270 1018 1280 1003 1280 990ZM1920 1338C1920 1323 1791 1309 1771 1307C1763 1289 1753 1271 1741 1255C1750 1235 1792 1135 1792 1117C1792 1115 1791 1112 1788 1110C1776 1103 1669 1040 1664 1040L1658 1042C1624 1076 1594 1115 1566 1154C1556 1153 1546 1152 1536 1152C1526 1152 1516 1153 1506 1154C1496 1139 1421 1040 1408 1040C1403 1040 1296 1104 1284 1110C1281 1112 1280 1115 1280 1117C1280 1134 1322 1235 1331 1255C1319 1271 1309 1289 1301 1307C1281 1309 1152 1323 1152 1338V1478C1152 1493 1281 1507 1301 1509C1309 1528 1319 1545 1331 1561C1322 1581 1280 1682 1280 1699C1280 1701 1281 1704 1284 1706C1296 1713 1403 1777 1408 1777C1421 1777 1496 1677 1506 1662C1516 1663 1526 1664 1536 1664C1546 1664 1556 1663 1566 1662C1576 1677 1651 1777 1664 1777C1669 1777 1776 1713 1788 1706C1791 1704 1792 1702 1792 1699C1792 1681 1750 1581 1741 1561C1753 1545 1763 1528 1771 1509C1791 1507 1920 1493 1920 1478ZM1920 314C1920 299 1791 285 1771 283C1763 265 1753 247 1741 231C1750 211 1792 111 1792 93C1792 91 1791 88 1788 86C1776 79 1669 16 1664 16L1658 18C1624 52 1594 91 1566 130C1556 129 1546 128 1536 128C1526 128 1516 129 1506 130C1496 115 1421 16 1408 16C1403 16 1296 80 1284 86C1281 88 1280 91 1280 93C1280 110 1322 211 1331 231C1319 247 1309 265 1301 283C1281 285 1152 299 1152 314V454C1152 469 1281 483 1301 485C1309 504 1319 521 1331 537C1322 557 1280 658 1280 675C1280 677 1281 680 1284 682C1296 689 1403 753 1408 753C1421 753 1496 653 1506 638C1516 639 1526 640 1536 640C1546 640 1556 639 1566 638C1576 653 1651 753 1664 753C1669 753 1776 689 1788 682C1791 680 1792 678 1792 675C1792 657 1750 557 1741 537C1753 521 1763 504 1771 485C1791 483 1920 469 1920 454Z"/></svg></a></div>
<div id="panel">
 <div class="phead">
  <div class="tab active" style="left:16px">全部</div><div class="tab" style="left:80px">下架</div><div class="tab" style="left:144px">上架</div>
 </div>
 <div class="toolbar">
  <span class="btn b-ref" style="left:15px;width:37px"><svg class="i " width="12.00" height="14" viewBox="0 0 1536 1792" style=""><path fill="#fff" d="M1511 1056C1511 1039 1497 1024 1479 1024H1287C1272 1024 1262 1033 1257 1047C1240 1087 1228 1125 1204 1164C1111 1316 946 1408 768 1408C639 1408 514 1358 420 1270L557 1133C569 1121 576 1105 576 1088C576 1053 547 1024 512 1024H64C29 1024 0 1053 0 1088V1536C0 1571 29 1600 64 1600C81 1600 97 1593 109 1581L238 1452C380 1587 569 1664 764 1664C1133 1664 1425 1417 1510 1063C1511 1061 1511 1058 1511 1056ZM1536 256C1536 221 1507 192 1472 192C1455 192 1439 199 1427 211L1297 340C1155 206 964 128 768 128C399 128 104 374 18 729C18 731 18 734 18 736C18 753 32 768 50 768H249C264 768 274 759 279 745C296 705 308 667 332 628C425 476 590 384 768 384C897 384 1022 433 1117 521L979 659C967 671 960 687 960 704C960 739 989 768 1024 768H1472C1507 768 1536 739 1536 704Z"/></svg></span>
  <span class="btn b-add" style="left:56px;width:66px"><svg class="i " width="10.21" height="13" viewBox="0 0 1408 1792" style=""><path fill="#fff" d="M1408 736C1408 683 1365 640 1312 640H896V224C896 171 853 128 800 128H608C555 128 512 171 512 224V640H96C43 640 0 683 0 736V928C0 981 43 1024 96 1024H512V1440C512 1493 555 1536 608 1536H800C853 1536 896 1493 896 1440V1024H1312C1365 1024 1408 981 1408 928Z"/></svg><span style="margin-left:3px">添加</span></span>
  <span class="btn b-del" style="left:126px;width:66px"><svg class="i " width="10.21" height="13" viewBox="0 0 1408 1792" style=""><path fill="#fff" d="M512 1376C512 1394 498 1408 480 1408H416C398 1408 384 1394 384 1376V672C384 654 398 640 416 640H480C498 640 512 654 512 672V1376ZM768 1376C768 1394 754 1408 736 1408H672C654 1408 640 1394 640 1376V672C640 654 654 640 672 640H736C754 640 768 654 768 672V1376ZM1024 1376C1024 1394 1010 1408 992 1408H928C910 1408 896 1394 896 1376V672C896 654 910 640 928 640H992C1010 640 1024 654 1024 672V1376ZM480 384 529 267C532 263 540 257 546 256H863C868 257 877 263 880 267L928 384ZM1408 416C1408 398 1394 384 1376 384H1067L997 217C977 168 917 128 864 128H544C491 128 431 168 411 217L341 384H32C14 384 0 398 0 416V480C0 498 14 512 32 512H128V1464C128 1574 200 1664 288 1664H1120C1208 1664 1280 1570 1280 1460V512H1376C1394 512 1408 498 1408 480Z"/></svg><span style="margin-left:3px">删除</span></span>
  <div class="search">搜索</div>
  <div class="bgroup">
    <span class="gb" style="width:38px;padding-left:1px"><svg class="i" width="12" height="13" viewBox="0 0 12 13" style="vertical-align:-2px"><path fill="#3a3a3a" fill-rule="evenodd" d="M0 0h12v13H0zM1.1 1.9v10h9.8V1.9z"/><path fill="#444" d="M2.2 2.9h.9v.9h-.9zM4.2 2.9h5.8v.9H4.2zM2.2 4.8h.9v.9h-.9zM4.2 4.8h5.8v.9H4.2zM2.2 6.7h.9v.9h-.9zM4.2 6.7h5.8v.9H4.2zM2.2 8.6h.9v.9h-.9zM4.2 8.6h5.8v.9H4.2zM2.2 10.5h.9v.9h-.9zM4.2 10.5h5.8v.9H4.2z" opacity=".75"/></svg></span><span class="gb" style="width:50px"><svg class="i" width="12.4" height="12" viewBox="0 0 12.4 12" style="vertical-align:-1.5px"><path fill="#3a3a3a" d="M0 0h3.4v3.2H0zM4.5 0h3.4v3.2H4.5zM9 0h3.4v3.2H9zM0 4.4h3.4v3.2H0zM4.5 4.4h3.4v3.2H4.5zM9 4.4h3.4v3.2H9zM0 8.8h3.4v3.2H0zM4.5 8.8h3.4v3.2H4.5zM9 8.8h3.4v3.2H9z"/></svg><span class="caret" style="margin-left:4px"></span></span><span class="gb" style="width:49px;border-right:0"><svg class="i" width="12" height="13" viewBox="0 0 12 13" style="vertical-align:-2px"><path fill="#3a3a3a" d="M0 10h12v2.8H0z"/><path fill="#ccc" d="M9.8 10.9h1.3v1H9.8z"/><path fill="#3a3a3a" d="M5.4 0H11V5.6L9.2 3.8L4.6 8.4L2.6 6.4L7.2 1.8z"/></svg><span class="caret" style="margin-left:4px"></span></span>
  </div>
  <span class="gsearch"><svg class="i" width="13" height="13" viewBox="0 0 13 13" style="vertical-align:-2px"><circle cx="5.5" cy="5.5" r="4.5" fill="none" stroke="#3a3a3a" stroke-width="2"/><path d="M8.7 8.7L12 12" stroke="#3a3a3a" stroke-width="2.4"/><circle cx="12" cy="12" r="1" fill="#3a3a3a"/></svg></span>
 </div>
 <table class="tbl"><thead><tr><th style="width:44px"><span class="cb"></span></th><th style="width:47px">Id</th><th style="width:206px">名称</th><th style="width:140px">类型</th><th style="width:93px">需求等级</th><th style="width:94px">时间限制</th><th style="width:94px">目标数值</th><th style="width:77px">自动接</th><th style="width:93px">自动奖励</th><th style="width:74px">图片</th><th style="width:91px">状态</th><th style="width:96px">操作</th></tr></thead><tbody><tr class="odd"><td><span class="cb"></span></td><td>9</td><td>levelA recharge 50000</td><td class="cj c-info">下级充值总额</td><td>-</td><td class="cj c-p">不限</td><td>500000</td><td class="cj c-succ">是</td><td class="cj c-p">否</td><td><svg class="gift" width="30" height="30" viewBox="0 0 30 30"><rect width="30" height="30" rx="9.5" fill="#fbe0de"/><path d="M10.2 11.4C7.4 10 6.6 6.9 8.4 5.8C10.4 4.7 13 7 14.7 11.2z" fill="#fff" stroke="#ff8a00" stroke-width="1.9" stroke-linejoin="round"/><path d="M19.8 11.4C22.6 10 23.4 6.9 21.6 5.8C19.6 4.7 17 7 15.3 11.2z" fill="#fff" stroke="#ff8a00" stroke-width="1.9" stroke-linejoin="round"/><path d="M8 10.9C9 11.5 11 11.4 14.5 11.3L12.8 8.5M22 10.9C21 11.5 19 11.4 15.5 11.3L17.2 8.5" fill="none" stroke="#ff4a10" stroke-width="1.6"/><path d="M11.3 5.3L15 11.6L18.7 5.3L17.3 4.9L15 8.4L12.7 4.9z" fill="#f0202a"/><path d="M4.2 11.3h21.9v4.2h-21.9z" fill="#ff2800"/><path d="M6.1 15.3h18.1v8.3a1.8 1.8 0 0 1-1.8 1.8h-14.5a1.8 1.8 0 0 1-1.8-1.8z" fill="#fa2300"/><path d="M13 11.3h4.2v11.3l-2.1-1.4l-2.1 1.4z" fill="#ffd800"/></svg></td><td class="cj c-succ"><svg class="i " width="12.00" height="14" viewBox="0 0 1536 1792" style="position:relative;top:0px"><path fill="currentColor" d="M1536 896C1536 472 1192 128 768 128C344 128 0 472 0 896C0 1320 344 1664 768 1664C1192 1664 1536 1320 1536 896Z"/></svg><span style="margin-left:4px">上架</span></td><td><span class="xbtn g"><svg class="i " width="10.29" height="12" viewBox="0 0 1536 1792" style=""><path fill="#fff" d="M363 1536H256V1408H128V1301L219 1210L454 1445ZM886 608C886 614 884 620 879 625L337 1167C332 1172 326 1174 320 1174C307 1174 298 1165 298 1152C298 1146 300 1140 305 1135L847 593C852 588 858 586 864 586C877 586 886 595 886 608ZM832 416 0 1248V1664H416L1248 832ZM1515 512C1515 478 1501 445 1478 421L1243 187C1219 163 1186 149 1152 149C1118 149 1085 163 1062 187L896 352L1312 768L1478 602C1501 579 1515 546 1515 512Z"/></svg></span><span class="xbtn r"><svg class="i " width="9.43" height="12" viewBox="0 0 1408 1792" style=""><path fill="#fff" d="M512 1376C512 1394 498 1408 480 1408H416C398 1408 384 1394 384 1376V672C384 654 398 640 416 640H480C498 640 512 654 512 672V1376ZM768 1376C768 1394 754 1408 736 1408H672C654 1408 640 1394 640 1376V672C640 654 654 640 672 640H736C754 640 768 654 768 672V1376ZM1024 1376C1024 1394 1010 1408 992 1408H928C910 1408 896 1394 896 1376V672C896 654 910 640 928 640H992C1010 640 1024 654 1024 672V1376ZM480 384 529 267C532 263 540 257 546 256H863C868 257 877 263 880 267L928 384ZM1408 416C1408 398 1394 384 1376 384H1067L997 217C977 168 917 128 864 128H544C491 128 431 168 411 217L341 384H32C14 384 0 398 0 416V480C0 498 14 512 32 512H128V1464C128 1574 200 1664 288 1664H1120C1208 1664 1280 1570 1280 1460V512H1376C1394 512 1408 498 1408 480Z"/></svg></span></td></tr><tr class=""><td><span class="cb"></span></td><td>8</td><td>be vip2</td><td class="cj c-info">VIP等级达成</td><td>-</td><td class="cj c-p">不限</td><td>6</td><td class="cj c-succ">是</td><td class="cj c-p">否</td><td><svg class="gift" width="30" height="30" viewBox="0 0 30 30"><rect width="30" height="30" rx="9.5" fill="#fbe0de"/><path d="M10.2 11.4C7.4 10 6.6 6.9 8.4 5.8C10.4 4.7 13 7 14.7 11.2z" fill="#fff" stroke="#ff8a00" stroke-width="1.9" stroke-linejoin="round"/><path d="M19.8 11.4C22.6 10 23.4 6.9 21.6 5.8C19.6 4.7 17 7 15.3 11.2z" fill="#fff" stroke="#ff8a00" stroke-width="1.9" stroke-linejoin="round"/><path d="M8 10.9C9 11.5 11 11.4 14.5 11.3L12.8 8.5M22 10.9C21 11.5 19 11.4 15.5 11.3L17.2 8.5" fill="none" stroke="#ff4a10" stroke-width="1.6"/><path d="M11.3 5.3L15 11.6L18.7 5.3L17.3 4.9L15 8.4L12.7 4.9z" fill="#f0202a"/><path d="M4.2 11.3h21.9v4.2h-21.9z" fill="#ff2800"/><path d="M6.1 15.3h18.1v8.3a1.8 1.8 0 0 1-1.8 1.8h-14.5a1.8 1.8 0 0 1-1.8-1.8z" fill="#fa2300"/><path d="M13 11.3h4.2v11.3l-2.1-1.4l-2.1 1.4z" fill="#ffd800"/></svg></td><td class="cj c-succ"><svg class="i " width="12.00" height="14" viewBox="0 0 1536 1792" style="position:relative;top:0px"><path fill="currentColor" d="M1536 896C1536 472 1192 128 768 128C344 128 0 472 0 896C0 1320 344 1664 768 1664C1192 1664 1536 1320 1536 896Z"/></svg><span style="margin-left:4px">上架</span></td><td><span class="xbtn g"><svg class="i " width="10.29" height="12" viewBox="0 0 1536 1792" style=""><path fill="#fff" d="M363 1536H256V1408H128V1301L219 1210L454 1445ZM886 608C886 614 884 620 879 625L337 1167C332 1172 326 1174 320 1174C307 1174 298 1165 298 1152C298 1146 300 1140 305 1135L847 593C852 588 858 586 864 586C877 586 886 595 886 608ZM832 416 0 1248V1664H416L1248 832ZM1515 512C1515 478 1501 445 1478 421L1243 187C1219 163 1186 149 1152 149C1118 149 1085 163 1062 187L896 352L1312 768L1478 602C1501 579 1515 546 1515 512Z"/></svg></span><span class="xbtn r"><svg class="i " width="9.43" height="12" viewBox="0 0 1408 1792" style=""><path fill="#fff" d="M512 1376C512 1394 498 1408 480 1408H416C398 1408 384 1394 384 1376V672C384 654 398 640 416 640H480C498 640 512 654 512 672V1376ZM768 1376C768 1394 754 1408 736 1408H672C654 1408 640 1394 640 1376V672C640 654 654 640 672 640H736C754 640 768 654 768 672V1376ZM1024 1376C1024 1394 1010 1408 992 1408H928C910 1408 896 1394 896 1376V672C896 654 910 640 928 640H992C1010 640 1024 654 1024 672V1376ZM480 384 529 267C532 263 540 257 546 256H863C868 257 877 263 880 267L928 384ZM1408 416C1408 398 1394 384 1376 384H1067L997 217C977 168 917 128 864 128H544C491 128 431 168 411 217L341 384H32C14 384 0 398 0 416V480C0 498 14 512 32 512H128V1464C128 1574 200 1664 288 1664H1120C1208 1664 1280 1570 1280 1460V512H1376C1394 512 1408 498 1408 480Z"/></svg></span></td></tr><tr class="odd"><td><span class="cb"></span></td><td>7</td><td>be vip1</td><td class="cj c-info">VIP等级达成</td><td>-</td><td class="cj c-p">不限</td><td>5</td><td class="cj c-succ">是</td><td class="cj c-p">否</td><td><svg class="gift" width="30" height="30" viewBox="0 0 30 30"><rect width="30" height="30" rx="9.5" fill="#fbe0de"/><path d="M10.2 11.4C7.4 10 6.6 6.9 8.4 5.8C10.4 4.7 13 7 14.7 11.2z" fill="#fff" stroke="#ff8a00" stroke-width="1.9" stroke-linejoin="round"/><path d="M19.8 11.4C22.6 10 23.4 6.9 21.6 5.8C19.6 4.7 17 7 15.3 11.2z" fill="#fff" stroke="#ff8a00" stroke-width="1.9" stroke-linejoin="round"/><path d="M8 10.9C9 11.5 11 11.4 14.5 11.3L12.8 8.5M22 10.9C21 11.5 19 11.4 15.5 11.3L17.2 8.5" fill="none" stroke="#ff4a10" stroke-width="1.6"/><path d="M11.3 5.3L15 11.6L18.7 5.3L17.3 4.9L15 8.4L12.7 4.9z" fill="#f0202a"/><path d="M4.2 11.3h21.9v4.2h-21.9z" fill="#ff2800"/><path d="M6.1 15.3h18.1v8.3a1.8 1.8 0 0 1-1.8 1.8h-14.5a1.8 1.8 0 0 1-1.8-1.8z" fill="#fa2300"/><path d="M13 11.3h4.2v11.3l-2.1-1.4l-2.1 1.4z" fill="#ffd800"/></svg></td><td class="cj c-succ"><svg class="i " width="12.00" height="14" viewBox="0 0 1536 1792" style="position:relative;top:0px"><path fill="currentColor" d="M1536 896C1536 472 1192 128 768 128C344 128 0 472 0 896C0 1320 344 1664 768 1664C1192 1664 1536 1320 1536 896Z"/></svg><span style="margin-left:4px">上架</span></td><td><span class="xbtn g"><svg class="i " width="10.29" height="12" viewBox="0 0 1536 1792" style=""><path fill="#fff" d="M363 1536H256V1408H128V1301L219 1210L454 1445ZM886 608C886 614 884 620 879 625L337 1167C332 1172 326 1174 320 1174C307 1174 298 1165 298 1152C298 1146 300 1140 305 1135L847 593C852 588 858 586 864 586C877 586 886 595 886 608ZM832 416 0 1248V1664H416L1248 832ZM1515 512C1515 478 1501 445 1478 421L1243 187C1219 163 1186 149 1152 149C1118 149 1085 163 1062 187L896 352L1312 768L1478 602C1501 579 1515 546 1515 512Z"/></svg></span><span class="xbtn r"><svg class="i " width="9.43" height="12" viewBox="0 0 1408 1792" style=""><path fill="#fff" d="M512 1376C512 1394 498 1408 480 1408H416C398 1408 384 1394 384 1376V672C384 654 398 640 416 640H480C498 640 512 654 512 672V1376ZM768 1376C768 1394 754 1408 736 1408H672C654 1408 640 1394 640 1376V672C640 654 654 640 672 640H736C754 640 768 654 768 672V1376ZM1024 1376C1024 1394 1010 1408 992 1408H928C910 1408 896 1394 896 1376V672C896 654 910 640 928 640H992C1010 640 1024 654 1024 672V1376ZM480 384 529 267C532 263 540 257 546 256H863C868 257 877 263 880 267L928 384ZM1408 416C1408 398 1394 384 1376 384H1067L997 217C977 168 917 128 864 128H544C491 128 431 168 411 217L341 384H32C14 384 0 398 0 416V480C0 498 14 512 32 512H128V1464C128 1574 200 1664 288 1664H1120C1208 1664 1280 1570 1280 1460V512H1376C1394 512 1408 498 1408 480Z"/></svg></span></td></tr><tr class=""><td><span class="cb"></span></td><td>6</td><td>invite 10</td><td class="cj c-info">邀请好友</td><td>-</td><td class="cj c-p">不限</td><td>10</td><td class="cj c-succ">是</td><td class="cj c-p">否</td><td><svg class="gift" width="30" height="30" viewBox="0 0 30 30"><rect width="30" height="30" rx="9.5" fill="#fbe0de"/><path d="M10.2 11.4C7.4 10 6.6 6.9 8.4 5.8C10.4 4.7 13 7 14.7 11.2z" fill="#fff" stroke="#ff8a00" stroke-width="1.9" stroke-linejoin="round"/><path d="M19.8 11.4C22.6 10 23.4 6.9 21.6 5.8C19.6 4.7 17 7 15.3 11.2z" fill="#fff" stroke="#ff8a00" stroke-width="1.9" stroke-linejoin="round"/><path d="M8 10.9C9 11.5 11 11.4 14.5 11.3L12.8 8.5M22 10.9C21 11.5 19 11.4 15.5 11.3L17.2 8.5" fill="none" stroke="#ff4a10" stroke-width="1.6"/><path d="M11.3 5.3L15 11.6L18.7 5.3L17.3 4.9L15 8.4L12.7 4.9z" fill="#f0202a"/><path d="M4.2 11.3h21.9v4.2h-21.9z" fill="#ff2800"/><path d="M6.1 15.3h18.1v8.3a1.8 1.8 0 0 1-1.8 1.8h-14.5a1.8 1.8 0 0 1-1.8-1.8z" fill="#fa2300"/><path d="M13 11.3h4.2v11.3l-2.1-1.4l-2.1 1.4z" fill="#ffd800"/></svg></td><td class="cj c-succ"><svg class="i " width="12.00" height="14" viewBox="0 0 1536 1792" style="position:relative;top:0px"><path fill="currentColor" d="M1536 896C1536 472 1192 128 768 128C344 128 0 472 0 896C0 1320 344 1664 768 1664C1192 1664 1536 1320 1536 896Z"/></svg><span style="margin-left:4px">上架</span></td><td><span class="xbtn g"><svg class="i " width="10.29" height="12" viewBox="0 0 1536 1792" style=""><path fill="#fff" d="M363 1536H256V1408H128V1301L219 1210L454 1445ZM886 608C886 614 884 620 879 625L337 1167C332 1172 326 1174 320 1174C307 1174 298 1165 298 1152C298 1146 300 1140 305 1135L847 593C852 588 858 586 864 586C877 586 886 595 886 608ZM832 416 0 1248V1664H416L1248 832ZM1515 512C1515 478 1501 445 1478 421L1243 187C1219 163 1186 149 1152 149C1118 149 1085 163 1062 187L896 352L1312 768L1478 602C1501 579 1515 546 1515 512Z"/></svg></span><span class="xbtn r"><svg class="i " width="9.43" height="12" viewBox="0 0 1408 1792" style=""><path fill="#fff" d="M512 1376C512 1394 498 1408 480 1408H416C398 1408 384 1394 384 1376V672C384 654 398 640 416 640H480C498 640 512 654 512 672V1376ZM768 1376C768 1394 754 1408 736 1408H672C654 1408 640 1394 640 1376V672C640 654 654 640 672 640H736C754 640 768 654 768 672V1376ZM1024 1376C1024 1394 1010 1408 992 1408H928C910 1408 896 1394 896 1376V672C896 654 910 640 928 640H992C1010 640 1024 654 1024 672V1376ZM480 384 529 267C532 263 540 257 546 256H863C868 257 877 263 880 267L928 384ZM1408 416C1408 398 1394 384 1376 384H1067L997 217C977 168 917 128 864 128H544C491 128 431 168 411 217L341 384H32C14 384 0 398 0 416V480C0 498 14 512 32 512H128V1464C128 1574 200 1664 288 1664H1120C1208 1664 1280 1570 1280 1460V512H1376C1394 512 1408 498 1408 480Z"/></svg></span></td></tr><tr class="odd"><td><span class="cb"></span></td><td>5</td><td>recharge</td><td class="cj c-succ">充值次数</td><td>-</td><td class="cj c-p">不限</td><td>1</td><td class="cj c-succ">是</td><td class="cj c-p">否</td><td><svg class="gift" width="30" height="30" viewBox="0 0 30 30"><rect width="30" height="30" rx="9.5" fill="#fbe0de"/><path d="M10.2 11.4C7.4 10 6.6 6.9 8.4 5.8C10.4 4.7 13 7 14.7 11.2z" fill="#fff" stroke="#ff8a00" stroke-width="1.9" stroke-linejoin="round"/><path d="M19.8 11.4C22.6 10 23.4 6.9 21.6 5.8C19.6 4.7 17 7 15.3 11.2z" fill="#fff" stroke="#ff8a00" stroke-width="1.9" stroke-linejoin="round"/><path d="M8 10.9C9 11.5 11 11.4 14.5 11.3L12.8 8.5M22 10.9C21 11.5 19 11.4 15.5 11.3L17.2 8.5" fill="none" stroke="#ff4a10" stroke-width="1.6"/><path d="M11.3 5.3L15 11.6L18.7 5.3L17.3 4.9L15 8.4L12.7 4.9z" fill="#f0202a"/><path d="M4.2 11.3h21.9v4.2h-21.9z" fill="#ff2800"/><path d="M6.1 15.3h18.1v8.3a1.8 1.8 0 0 1-1.8 1.8h-14.5a1.8 1.8 0 0 1-1.8-1.8z" fill="#fa2300"/><path d="M13 11.3h4.2v11.3l-2.1-1.4l-2.1 1.4z" fill="#ffd800"/></svg></td><td class="cj c-succ"><svg class="i " width="12.00" height="14" viewBox="0 0 1536 1792" style="position:relative;top:0px"><path fill="currentColor" d="M1536 896C1536 472 1192 128 768 128C344 128 0 472 0 896C0 1320 344 1664 768 1664C1192 1664 1536 1320 1536 896Z"/></svg><span style="margin-left:4px">上架</span></td><td><span class="xbtn g"><svg class="i " width="10.29" height="12" viewBox="0 0 1536 1792" style=""><path fill="#fff" d="M363 1536H256V1408H128V1301L219 1210L454 1445ZM886 608C886 614 884 620 879 625L337 1167C332 1172 326 1174 320 1174C307 1174 298 1165 298 1152C298 1146 300 1140 305 1135L847 593C852 588 858 586 864 586C877 586 886 595 886 608ZM832 416 0 1248V1664H416L1248 832ZM1515 512C1515 478 1501 445 1478 421L1243 187C1219 163 1186 149 1152 149C1118 149 1085 163 1062 187L896 352L1312 768L1478 602C1501 579 1515 546 1515 512Z"/></svg></span><span class="xbtn r"><svg class="i " width="9.43" height="12" viewBox="0 0 1408 1792" style=""><path fill="#fff" d="M512 1376C512 1394 498 1408 480 1408H416C398 1408 384 1394 384 1376V672C384 654 398 640 416 640H480C498 640 512 654 512 672V1376ZM768 1376C768 1394 754 1408 736 1408H672C654 1408 640 1394 640 1376V672C640 654 654 640 672 640H736C754 640 768 654 768 672V1376ZM1024 1376C1024 1394 1010 1408 992 1408H928C910 1408 896 1394 896 1376V672C896 654 910 640 928 640H992C1010 640 1024 654 1024 672V1376ZM480 384 529 267C532 263 540 257 546 256H863C868 257 877 263 880 267L928 384ZM1408 416C1408 398 1394 384 1376 384H1067L997 217C977 168 917 128 864 128H544C491 128 431 168 411 217L341 384H32C14 384 0 398 0 416V480C0 498 14 512 32 512H128V1464C128 1574 200 1664 288 1664H1120C1208 1664 1280 1570 1280 1460V512H1376C1394 512 1408 498 1408 480Z"/></svg></span></td></tr><tr class=""><td><span class="cb"></span></td><td>4</td><td>buy group</td><td class="cj c-warn">完成下单</td><td>-</td><td class="cj c-succ">每天</td><td>12</td><td class="cj c-succ">是</td><td class="cj c-p">否</td><td><svg class="gift" width="30" height="30" viewBox="0 0 30 30"><rect width="30" height="30" rx="9.5" fill="#fbe0de"/><path d="M10.2 11.4C7.4 10 6.6 6.9 8.4 5.8C10.4 4.7 13 7 14.7 11.2z" fill="#fff" stroke="#ff8a00" stroke-width="1.9" stroke-linejoin="round"/><path d="M19.8 11.4C22.6 10 23.4 6.9 21.6 5.8C19.6 4.7 17 7 15.3 11.2z" fill="#fff" stroke="#ff8a00" stroke-width="1.9" stroke-linejoin="round"/><path d="M8 10.9C9 11.5 11 11.4 14.5 11.3L12.8 8.5M22 10.9C21 11.5 19 11.4 15.5 11.3L17.2 8.5" fill="none" stroke="#ff4a10" stroke-width="1.6"/><path d="M11.3 5.3L15 11.6L18.7 5.3L17.3 4.9L15 8.4L12.7 4.9z" fill="#f0202a"/><path d="M4.2 11.3h21.9v4.2h-21.9z" fill="#ff2800"/><path d="M6.1 15.3h18.1v8.3a1.8 1.8 0 0 1-1.8 1.8h-14.5a1.8 1.8 0 0 1-1.8-1.8z" fill="#fa2300"/><path d="M13 11.3h4.2v11.3l-2.1-1.4l-2.1 1.4z" fill="#ffd800"/></svg></td><td class="cj c-succ"><svg class="i " width="12.00" height="14" viewBox="0 0 1536 1792" style="position:relative;top:0px"><path fill="currentColor" d="M1536 896C1536 472 1192 128 768 128C344 128 0 472 0 896C0 1320 344 1664 768 1664C1192 1664 1536 1320 1536 896Z"/></svg><span style="margin-left:4px">上架</span></td><td><span class="xbtn g"><svg class="i " width="10.29" height="12" viewBox="0 0 1536 1792" style=""><path fill="#fff" d="M363 1536H256V1408H128V1301L219 1210L454 1445ZM886 608C886 614 884 620 879 625L337 1167C332 1172 326 1174 320 1174C307 1174 298 1165 298 1152C298 1146 300 1140 305 1135L847 593C852 588 858 586 864 586C877 586 886 595 886 608ZM832 416 0 1248V1664H416L1248 832ZM1515 512C1515 478 1501 445 1478 421L1243 187C1219 163 1186 149 1152 149C1118 149 1085 163 1062 187L896 352L1312 768L1478 602C1501 579 1515 546 1515 512Z"/></svg></span><span class="xbtn r"><svg class="i " width="9.43" height="12" viewBox="0 0 1408 1792" style=""><path fill="#fff" d="M512 1376C512 1394 498 1408 480 1408H416C398 1408 384 1394 384 1376V672C384 654 398 640 416 640H480C498 640 512 654 512 672V1376ZM768 1376C768 1394 754 1408 736 1408H672C654 1408 640 1394 640 1376V672C640 654 654 640 672 640H736C754 640 768 654 768 672V1376ZM1024 1376C1024 1394 1010 1408 992 1408H928C910 1408 896 1394 896 1376V672C896 654 910 640 928 640H992C1010 640 1024 654 1024 672V1376ZM480 384 529 267C532 263 540 257 546 256H863C868 257 877 263 880 267L928 384ZM1408 416C1408 398 1394 384 1376 384H1067L997 217C977 168 917 128 864 128H544C491 128 431 168 411 217L341 384H32C14 384 0 398 0 416V480C0 498 14 512 32 512H128V1464C128 1574 200 1664 288 1664H1120C1208 1664 1280 1570 1280 1460V512H1376C1394 512 1408 498 1408 480Z"/></svg></span></td></tr><tr class="odd"><td><span class="cb"></span></td><td>3</td><td>buy finance</td><td class="cj c-dark">购买理财次数</td><td>-</td><td class="cj c-p">不限</td><td>1</td><td class="cj c-succ">是</td><td class="cj c-p">否</td><td><svg class="gift" width="30" height="30" viewBox="0 0 30 30"><rect width="30" height="30" rx="9.5" fill="#fbe0de"/><path d="M10.2 11.4C7.4 10 6.6 6.9 8.4 5.8C10.4 4.7 13 7 14.7 11.2z" fill="#fff" stroke="#ff8a00" stroke-width="1.9" stroke-linejoin="round"/><path d="M19.8 11.4C22.6 10 23.4 6.9 21.6 5.8C19.6 4.7 17 7 15.3 11.2z" fill="#fff" stroke="#ff8a00" stroke-width="1.9" stroke-linejoin="round"/><path d="M8 10.9C9 11.5 11 11.4 14.5 11.3L12.8 8.5M22 10.9C21 11.5 19 11.4 15.5 11.3L17.2 8.5" fill="none" stroke="#ff4a10" stroke-width="1.6"/><path d="M11.3 5.3L15 11.6L18.7 5.3L17.3 4.9L15 8.4L12.7 4.9z" fill="#f0202a"/><path d="M4.2 11.3h21.9v4.2h-21.9z" fill="#ff2800"/><path d="M6.1 15.3h18.1v8.3a1.8 1.8 0 0 1-1.8 1.8h-14.5a1.8 1.8 0 0 1-1.8-1.8z" fill="#fa2300"/><path d="M13 11.3h4.2v11.3l-2.1-1.4l-2.1 1.4z" fill="#ffd800"/></svg></td><td class="cj c-succ"><svg class="i " width="12.00" height="14" viewBox="0 0 1536 1792" style="position:relative;top:0px"><path fill="currentColor" d="M1536 896C1536 472 1192 128 768 128C344 128 0 472 0 896C0 1320 344 1664 768 1664C1192 1664 1536 1320 1536 896Z"/></svg><span style="margin-left:4px">上架</span></td><td><span class="xbtn g"><svg class="i " width="10.29" height="12" viewBox="0 0 1536 1792" style=""><path fill="#fff" d="M363 1536H256V1408H128V1301L219 1210L454 1445ZM886 608C886 614 884 620 879 625L337 1167C332 1172 326 1174 320 1174C307 1174 298 1165 298 1152C298 1146 300 1140 305 1135L847 593C852 588 858 586 864 586C877 586 886 595 886 608ZM832 416 0 1248V1664H416L1248 832ZM1515 512C1515 478 1501 445 1478 421L1243 187C1219 163 1186 149 1152 149C1118 149 1085 163 1062 187L896 352L1312 768L1478 602C1501 579 1515 546 1515 512Z"/></svg></span><span class="xbtn r"><svg class="i " width="9.43" height="12" viewBox="0 0 1408 1792" style=""><path fill="#fff" d="M512 1376C512 1394 498 1408 480 1408H416C398 1408 384 1394 384 1376V672C384 654 398 640 416 640H480C498 640 512 654 512 672V1376ZM768 1376C768 1394 754 1408 736 1408H672C654 1408 640 1394 640 1376V672C640 654 654 640 672 640H736C754 640 768 654 768 672V1376ZM1024 1376C1024 1394 1010 1408 992 1408H928C910 1408 896 1394 896 1376V672C896 654 910 640 928 640H992C1010 640 1024 654 1024 672V1376ZM480 384 529 267C532 263 540 257 546 256H863C868 257 877 263 880 267L928 384ZM1408 416C1408 398 1394 384 1376 384H1067L997 217C977 168 917 128 864 128H544C491 128 431 168 411 217L341 384H32C14 384 0 398 0 416V480C0 498 14 512 32 512H128V1464C128 1574 200 1664 288 1664H1120C1208 1664 1280 1570 1280 1460V512H1376C1394 512 1408 498 1408 480Z"/></svg></span></td></tr><tr class=""><td><span class="cb"></span></td><td>2</td><td>invite</td><td class="cj c-info">邀请好友</td><td>-</td><td class="cj c-p">不限</td><td>1</td><td class="cj c-succ">是</td><td class="cj c-p">否</td><td><svg class="gift" width="30" height="30" viewBox="0 0 30 30"><rect width="30" height="30" rx="9.5" fill="#fbe0de"/><path d="M10.2 11.4C7.4 10 6.6 6.9 8.4 5.8C10.4 4.7 13 7 14.7 11.2z" fill="#fff" stroke="#ff8a00" stroke-width="1.9" stroke-linejoin="round"/><path d="M19.8 11.4C22.6 10 23.4 6.9 21.6 5.8C19.6 4.7 17 7 15.3 11.2z" fill="#fff" stroke="#ff8a00" stroke-width="1.9" stroke-linejoin="round"/><path d="M8 10.9C9 11.5 11 11.4 14.5 11.3L12.8 8.5M22 10.9C21 11.5 19 11.4 15.5 11.3L17.2 8.5" fill="none" stroke="#ff4a10" stroke-width="1.6"/><path d="M11.3 5.3L15 11.6L18.7 5.3L17.3 4.9L15 8.4L12.7 4.9z" fill="#f0202a"/><path d="M4.2 11.3h21.9v4.2h-21.9z" fill="#ff2800"/><path d="M6.1 15.3h18.1v8.3a1.8 1.8 0 0 1-1.8 1.8h-14.5a1.8 1.8 0 0 1-1.8-1.8z" fill="#fa2300"/><path d="M13 11.3h4.2v11.3l-2.1-1.4l-2.1 1.4z" fill="#ffd800"/></svg></td><td class="cj c-succ"><svg class="i " width="12.00" height="14" viewBox="0 0 1536 1792" style="position:relative;top:0px"><path fill="currentColor" d="M1536 896C1536 472 1192 128 768 128C344 128 0 472 0 896C0 1320 344 1664 768 1664C1192 1664 1536 1320 1536 896Z"/></svg><span style="margin-left:4px">上架</span></td><td><span class="xbtn g"><svg class="i " width="10.29" height="12" viewBox="0 0 1536 1792" style=""><path fill="#fff" d="M363 1536H256V1408H128V1301L219 1210L454 1445ZM886 608C886 614 884 620 879 625L337 1167C332 1172 326 1174 320 1174C307 1174 298 1165 298 1152C298 1146 300 1140 305 1135L847 593C852 588 858 586 864 586C877 586 886 595 886 608ZM832 416 0 1248V1664H416L1248 832ZM1515 512C1515 478 1501 445 1478 421L1243 187C1219 163 1186 149 1152 149C1118 149 1085 163 1062 187L896 352L1312 768L1478 602C1501 579 1515 546 1515 512Z"/></svg></span><span class="xbtn r"><svg class="i " width="9.43" height="12" viewBox="0 0 1408 1792" style=""><path fill="#fff" d="M512 1376C512 1394 498 1408 480 1408H416C398 1408 384 1394 384 1376V672C384 654 398 640 416 640H480C498 640 512 654 512 672V1376ZM768 1376C768 1394 754 1408 736 1408H672C654 1408 640 1394 640 1376V672C640 654 654 640 672 640H736C754 640 768 654 768 672V1376ZM1024 1376C1024 1394 1010 1408 992 1408H928C910 1408 896 1394 896 1376V672C896 654 910 640 928 640H992C1010 640 1024 654 1024 672V1376ZM480 384 529 267C532 263 540 257 546 256H863C868 257 877 263 880 267L928 384ZM1408 416C1408 398 1394 384 1376 384H1067L997 217C977 168 917 128 864 128H544C491 128 431 168 411 217L341 384H32C14 384 0 398 0 416V480C0 498 14 512 32 512H128V1464C128 1574 200 1664 288 1664H1120C1208 1664 1280 1570 1280 1460V512H1376C1394 512 1408 498 1408 480Z"/></svg></span></td></tr><tr class="odd"><td><span class="cb"></span></td><td>1</td><td>sigin</td><td class="cj c-p">签到(登录)</td><td>-</td><td class="cj c-p">不限</td><td>1</td><td class="cj c-succ">是</td><td class="cj c-p">否</td><td><svg class="gift" width="30" height="30" viewBox="0 0 30 30"><rect width="30" height="30" rx="9.5" fill="#fbe0de"/><path d="M10.2 11.4C7.4 10 6.6 6.9 8.4 5.8C10.4 4.7 13 7 14.7 11.2z" fill="#fff" stroke="#ff8a00" stroke-width="1.9" stroke-linejoin="round"/><path d="M19.8 11.4C22.6 10 23.4 6.9 21.6 5.8C19.6 4.7 17 7 15.3 11.2z" fill="#fff" stroke="#ff8a00" stroke-width="1.9" stroke-linejoin="round"/><path d="M8 10.9C9 11.5 11 11.4 14.5 11.3L12.8 8.5M22 10.9C21 11.5 19 11.4 15.5 11.3L17.2 8.5" fill="none" stroke="#ff4a10" stroke-width="1.6"/><path d="M11.3 5.3L15 11.6L18.7 5.3L17.3 4.9L15 8.4L12.7 4.9z" fill="#f0202a"/><path d="M4.2 11.3h21.9v4.2h-21.9z" fill="#ff2800"/><path d="M6.1 15.3h18.1v8.3a1.8 1.8 0 0 1-1.8 1.8h-14.5a1.8 1.8 0 0 1-1.8-1.8z" fill="#fa2300"/><path d="M13 11.3h4.2v11.3l-2.1-1.4l-2.1 1.4z" fill="#ffd800"/></svg></td><td class="cj c-succ"><svg class="i " width="12.00" height="14" viewBox="0 0 1536 1792" style="position:relative;top:0px"><path fill="currentColor" d="M1536 896C1536 472 1192 128 768 128C344 128 0 472 0 896C0 1320 344 1664 768 1664C1192 1664 1536 1320 1536 896Z"/></svg><span style="margin-left:4px">上架</span></td><td><span class="xbtn g"><svg class="i " width="10.29" height="12" viewBox="0 0 1536 1792" style=""><path fill="#fff" d="M363 1536H256V1408H128V1301L219 1210L454 1445ZM886 608C886 614 884 620 879 625L337 1167C332 1172 326 1174 320 1174C307 1174 298 1165 298 1152C298 1146 300 1140 305 1135L847 593C852 588 858 586 864 586C877 586 886 595 886 608ZM832 416 0 1248V1664H416L1248 832ZM1515 512C1515 478 1501 445 1478 421L1243 187C1219 163 1186 149 1152 149C1118 149 1085 163 1062 187L896 352L1312 768L1478 602C1501 579 1515 546 1515 512Z"/></svg></span><span class="xbtn r"><svg class="i " width="9.43" height="12" viewBox="0 0 1408 1792" style=""><path fill="#fff" d="M512 1376C512 1394 498 1408 480 1408H416C398 1408 384 1394 384 1376V672C384 654 398 640 416 640H480C498 640 512 654 512 672V1376ZM768 1376C768 1394 754 1408 736 1408H672C654 1408 640 1394 640 1376V672C640 654 654 640 672 640H736C754 640 768 654 768 672V1376ZM1024 1376C1024 1394 1010 1408 992 1408H928C910 1408 896 1394 896 1376V672C896 654 910 640 928 640H992C1010 640 1024 654 1024 672V1376ZM480 384 529 267C532 263 540 257 546 256H863C868 257 877 263 880 267L928 384ZM1408 416C1408 398 1394 384 1376 384H1067L997 217C977 168 917 128 864 128H544C491 128 431 168 411 217L341 384H32C14 384 0 398 0 416V480C0 498 14 512 32 512H128V1464C128 1574 200 1664 288 1664H1120C1208 1664 1280 1570 1280 1460V512H1376C1394 512 1408 498 1408 480Z"/></svg></span></td></tr></tbody></table>
 <div class="pinfo">显示第 1 到第 9 条记录，总共 9 条记录</div>
</div>
<div class="wm" style="left:91px;top:103px">玖福源码</div><div class="wm" style="left:571px;top:103px">玖福源码</div><div class="wm" style="left:1051px;top:103px">玖福源码</div><div class="wm" style="left:91px;top:365px">玖福源码</div><div class="wm" style="left:571px;top:365px">玖福源码</div><div class="wm" style="left:1051px;top:365px">玖福源码</div><div class="wm" style="left:91px;top:627px">玖福源码</div><div class="wm" style="left:571px;top:627px">玖福源码</div><div class="wm" style="left:1051px;top:627px">玖福源码</div>
<div id="trace"><div class="tlogo"><svg width="30" height="28" viewBox="0 0 30 28"><path d="M3 0H30V28H0V3A3 3 0 0 1 3 0z" fill="#52bd28"/><path d="M1.5 0.5H30L15.5 13z" fill="#6fc94c"/><path d="M16.6 4.3C20.5 11 15 14.2 10 17C6.5 19 4.3 20.5 3.8 24C0.2 18.5 2 15 6.8 12.3C11.8 9.5 16.8 8.4 16.6 4.3z" fill="#f2f4f6"/><path d="M22.9 10C26.8 16.5 21.5 20 16.5 23C13.5 24.8 11.3 26 10.8 28H6.3C5.8 24 9 21 13.5 18.4C18.5 15.5 23.2 14.3 22.9 10z" fill="#f2f4f6"/><path d="M26.4 17C29.3 22 26.5 25.5 22.5 28H14.3C15.3 26 17.8 24.5 20.3 23C24 20.8 26.7 20 26.4 17z" fill="#f2f4f6"/></svg></div><div class="ttime">0.078518s</div></div>
</div></body></html>
